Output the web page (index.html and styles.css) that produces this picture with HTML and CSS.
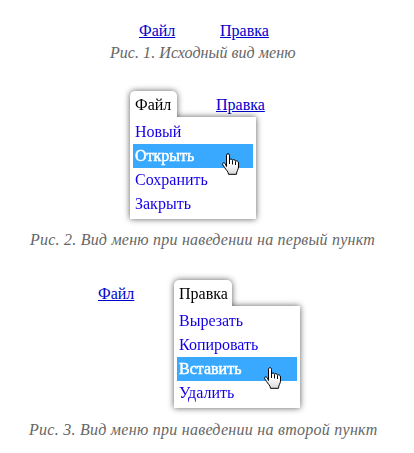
FILE: index.html
```html
<!DOCTYPE html>
<html lang="ru">
<head>
<meta charset="utf-8">
<title>Меню</title>
<link rel="stylesheet" href="styles.css">
</head>
<body>
<svg class="defs" width="0" height="0" aria-hidden="true">
  <linearGradient id="shade" x1="0" y1="0" x2="0" y2="1">
    <stop offset="0.5" stop-color="#fff"/>
    <stop offset="1" stop-color="#d8d8d8"/>
  </linearGradient>
  <symbol id="hand" viewBox="0 0 17 22">
    <path class="hand-fill" d="M4.5 13.5V2.2C4.5 .2 7.5 .2 7.5 2.2V7C8 5.4 10.3 5.700 10.500 7.300C11.300 6.100 13.300 6.600 13.500 8.200C14.500 7.400 16.500 8 16.500 10V14C16.500 16.500 14.500 18 14.500 21.300H6.500C6.500 18.500 3.500 16.500 2.500 14.300L.7 11.800C-.1 10 2 9.200 3.200 10.700Z"/>
    <path class="hand-line" d="M7.500 6.500V11M10.500 7.500V11.500M13.500 8.500V12"/>
  </symbol>
</svg>

<figure class="figure figure-first">
  <ul class="menu">
    <li class="item"><a class="link" href="#">Файл</a></li>
    <li class="item"><a class="link" href="#">Правка</a></li>
  </ul>
  <figcaption class="caption cap-one">Рис. 1. Исходный вид меню</figcaption>
</figure>

<figure class="figure figure-second">
  <ul class="menu">
    <li class="item open">
      <a class="link file" href="#">Файл</a>
      <ul class="dropdown">
        <li>Новый</li>
        <li class="active">Открыть<svg class="cursor"><use href="#hand"/></svg></li>
        <li>Сохранить</li>
        <li>Закрыть</li>
      </ul>
    </li>
    <li class="item"><a class="link" href="#">Правка</a></li>
  </ul>
  <figcaption class="caption cap-two">Рис. 2. Вид меню при наведении на первый пункт</figcaption>
</figure>

<figure class="figure figure-third">
  <ul class="menu">
    <li class="item"><a class="link" href="#">Файл</a></li>
    <li class="item open">
      <a class="link edit" href="#">Правка</a>
      <ul class="dropdown">
        <li>Вырезать</li>
        <li>Копировать</li>
        <li class="active">Вставить<svg class="cursor"><use href="#hand"/></svg></li>
        <li>Удалить</li>
      </ul>
    </li>
  </ul>
  <figcaption class="caption cap-three">Рис. 3. Вид меню при наведении на второй пункт</figcaption>
</figure>
</body>
</html>
```
FILE: styles.css
```css
body {
  margin: 0;
  height: 453px;
  overflow: hidden;
  background: #fff;
  font: 16px/24px "Liberation Serif", "Times New Roman", serif;
}
.defs { position: absolute; }
.figure { margin: 0; }
.figure-first { padding: 17px 0 0 134px; height: 74px; }
.figure-second { padding: 0 0 0 130px; height: 189px; }
.figure-third { padding: 0 0 0 93px; }

.menu {
  display: flex;
  margin: 0;
  padding: 0;
  list-style: none;
}
.item { width: 81px; }
.link {
  display: inline-block;
  height: 26px;
  padding: 0 5px;
  line-height: 28px;
  color: #0000cd;
}
.file { width: 37px; }
.edit { width: 48px; }
.open {
  position: relative;
  filter: drop-shadow(0 0 3px rgba(0, 0, 0, .65));
}
.open .link {
  border-radius: 5px 5px 0 0;
  background: #fff;
  color: #000;
  text-decoration: none;
}
.dropdown {
  position: absolute;
  top: 26px;
  left: 0;
  width: 120px;
  margin: 0;
  padding: 3px;
  background: #fff;
  list-style: none;
  color: #1400e6;
}
.dropdown li {
  height: 24px;
  padding-left: 2px;
}
.dropdown .active {
  position: relative;
  background: #38a9ff;
  color: #fff;
  -webkit-text-stroke: .5px #fff;
}
.cursor {
  position: absolute;
  z-index: 1;
  top: 9px;
  right: 14px;
  width: 17px;
  height: 22px;
}
.figure-third .cursor { top: 10px; right: 16px; }
.hand-fill { fill: url(#shade); stroke: #000; stroke-width: 1; }
.hand-line { fill: none; stroke: #000; stroke-width: 1; }

.caption {
  width: max-content;
  color: #666;
  font-style: italic;
  line-height: 20px;
  white-space: nowrap;
}
.cap-one { margin: 0 0 0 -24px; letter-spacing: .05px; }
.cap-two { margin: 113px 0 0 -100px; letter-spacing: .22px; }
.cap-three { margin: 114px 0 0 -64px; letter-spacing: .26px; }
```
